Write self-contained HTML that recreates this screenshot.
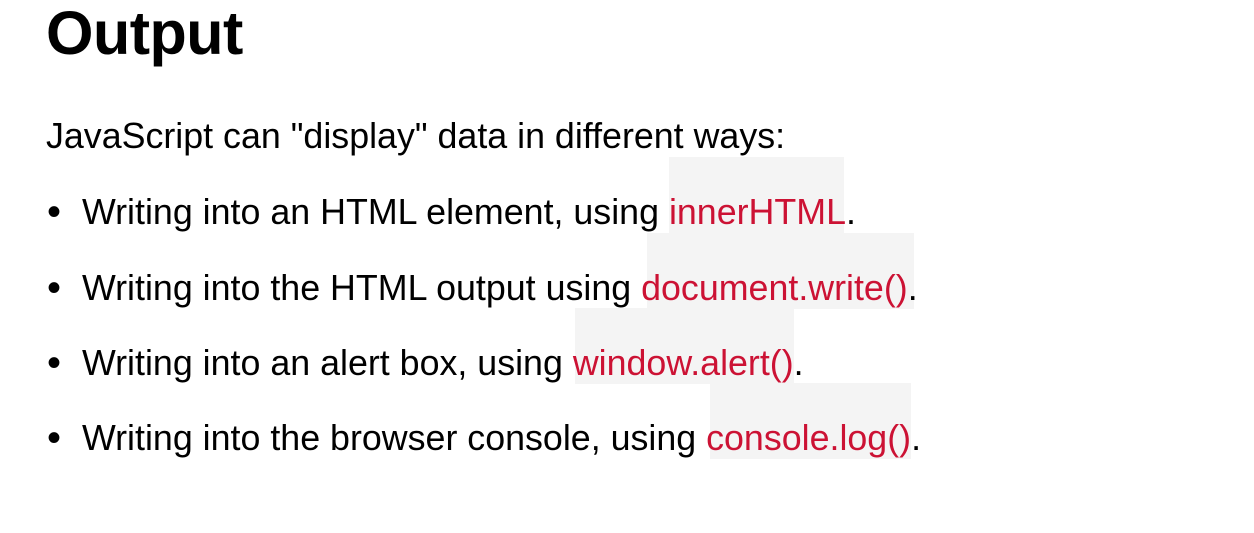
<!DOCTYPE html>
<html><head><meta charset="utf-8"><style>
html,body{margin:0;padding:0;background:#fff;width:1254px;height:533px;overflow:hidden;position:relative;font-family:"Liberation Sans",Arial,sans-serif;color:#000}
.t{position:absolute;left:46px;top:-2px;font-size:61px;font-weight:bold;letter-spacing:-0.5px}
.l{position:absolute;left:46px;font-size:35.8px;white-space:nowrap;line-height:40px}
.b{position:absolute;font-size:40px;line-height:40px;left:47px}
.bx{position:absolute;background:#f4f4f4}
.c{color:#cc1234}
</style></head><body>
<div class="bx" style="left:669px;top:157px;width:175px;height:76px"></div>
<div class="bx" style="left:647px;top:233px;width:267px;height:76px"></div>
<div class="bx" style="left:575px;top:308px;width:219px;height:76px"></div>
<div class="bx" style="left:710px;top:383px;width:201px;height:76px"></div>
<div class="t">Output</div>
<div class="l" style="top:116px">JavaScript can "display" data in different ways:</div>
<div class="b" style="top:192px">•</div><div class="l" style="left:82px;top:192px">Writing into an HTML element, using <span class="c">innerHTML</span>.</div>
<div class="b" style="top:268px">•</div><div class="l" style="left:82px;top:268px">Writing into the HTML output using <span class="c">document.write()</span>.</div>
<div class="b" style="top:343px">•</div><div class="l" style="left:82px;top:343px">Writing into an alert box, using <span class="c">window.alert()</span>.</div>
<div class="b" style="top:418px">•</div><div class="l" style="left:82px;top:418px">Writing into the browser console, using <span class="c">console.log()</span>.</div>
</body></html>
